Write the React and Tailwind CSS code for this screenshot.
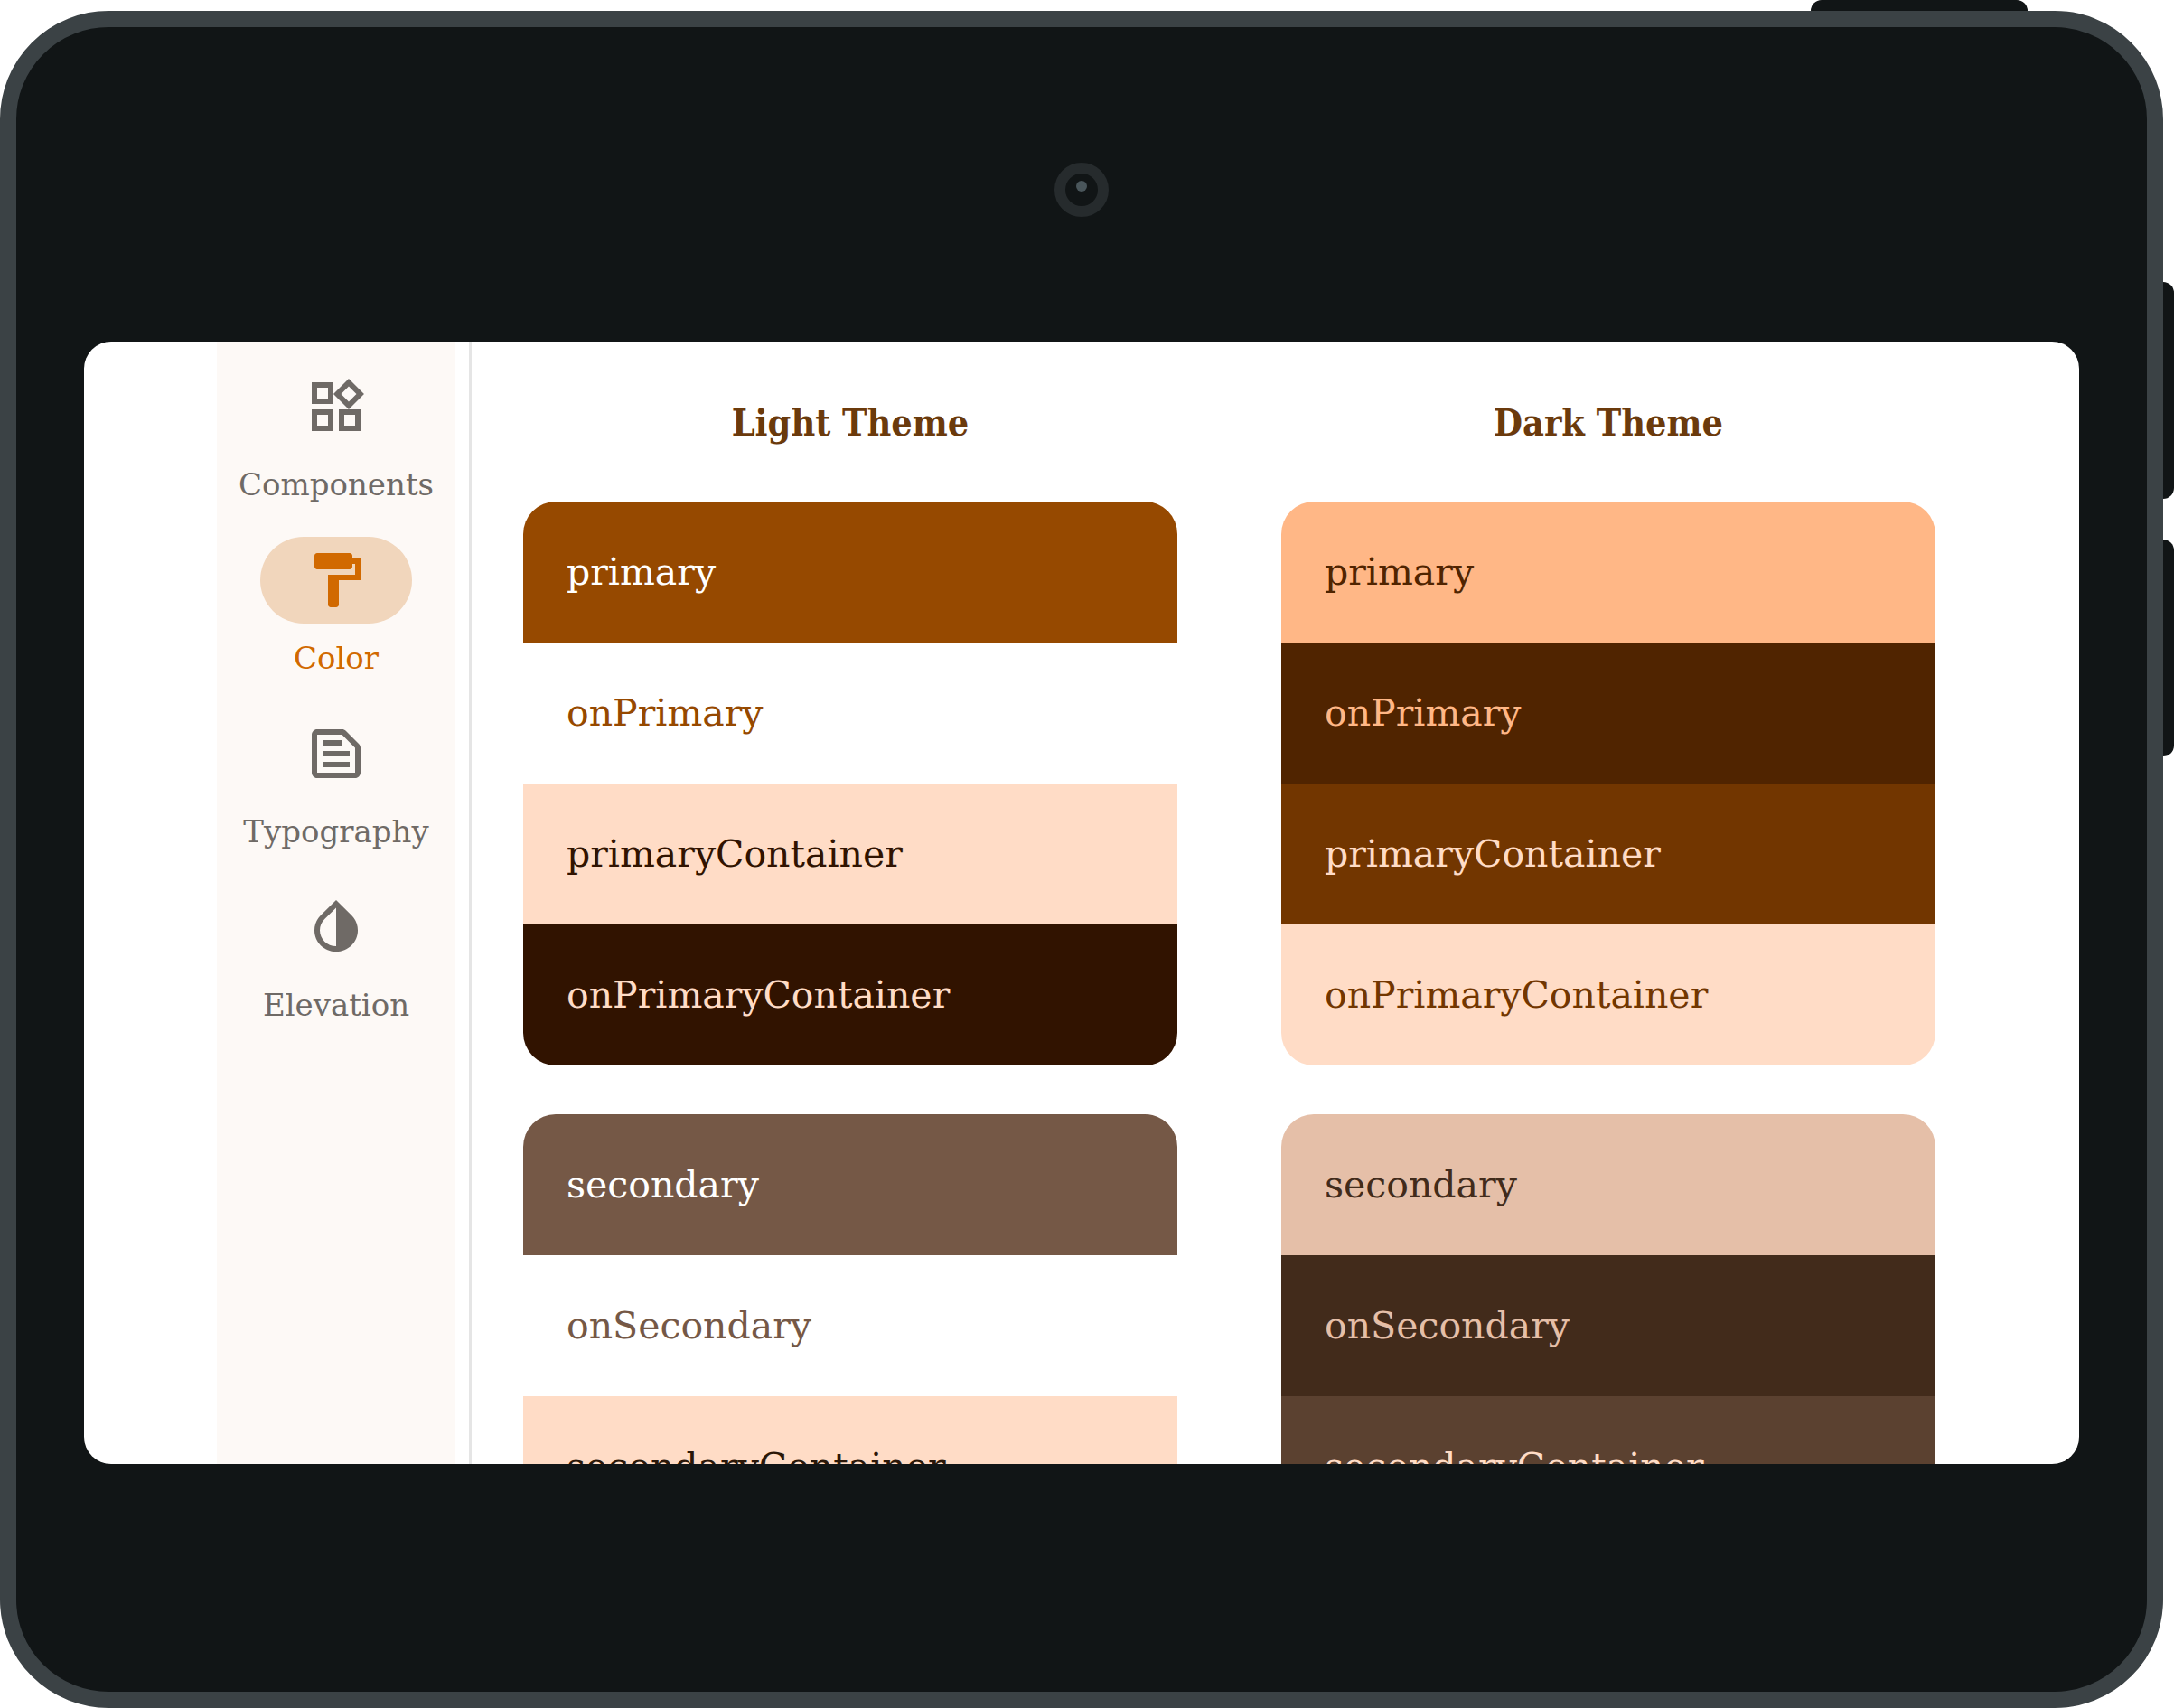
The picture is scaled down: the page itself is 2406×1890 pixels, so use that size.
import React from "react";

const NAV_ITEMS = [
  {
    label: "Components",
    path: "M16.66 4.52l2.83 2.83-2.83 2.83-2.83-2.83 2.83-2.83M9 5v4H5V5h4m10 10v4h-4v-4h4M9 15v4H5v-4h4m7.66-13.31L11 7.34 16.66 13l5.66-5.66-5.66-5.65zM11 3H3v8h8V3zm10 10h-8v8h8v-8zm-10 0H3v8h8v-8z",
  },
  {
    label: "Color",
    active: true,
    path: "M18 4V3c0-.55-.45-1-1-1H5c-.55 0-1 .45-1 1v4c0 .55.45 1 1 1h12c.55 0 1-.45 1-1V6h1v4H9v11c0 .55.45 1 1 1h2c.55 0 1-.45 1-1v-9h8V4h-3z",
  },
  {
    label: "Typography",
    path: "M14.17 5L19 9.83V19H5V5h9.17m0-2H5c-1.1 0-2 .9-2 2v14c0 1.1.9 2 2 2h14c1.1 0 2-.9 2-2V9.83c0-.53-.21-1.04-.59-1.41l-4.83-4.83c-.37-.38-.88-.59-1.41-.59zM7 15h10v2H7v-2zm0-4h10v2H7v-2zm0-4h7v2H7V7z",
  },
  {
    label: "Elevation",
    path: "M12 4.81V19c-3.31 0-6-2.63-6-5.87 0-1.56.62-3.03 1.75-4.14L12 4.81M6.35 7.56C4.9 8.99 4 10.96 4 13.13 4 17.48 7.58 21 12 21s8-3.52 8-7.87c0-2.17-.9-4.14-2.35-5.57L12 2 6.35 7.56z",
  },
];

const THEMES = [
  {
    title: "Light Theme",
    groups: [
      [
        ["primary", "bg-[#964900] text-white"],
        ["onPrimary", "bg-white text-[#964900]"],
        ["primaryContainer", "bg-[#ffdcc6] text-[#311300]"],
        ["onPrimaryContainer", "bg-[#311300] text-[#ffdcc6]"],
      ],
      [
        ["secondary", "bg-[#755846] text-white"],
        ["onSecondary", "bg-white text-[#755846]"],
        ["secondaryContainer", "bg-[#ffdcc6] text-[#2b1708]"],
      ],
    ],
  },
  {
    title: "Dark Theme",
    groups: [
      [
        ["primary", "bg-[#ffb786] text-[#502400]"],
        ["onPrimary", "bg-[#502400] text-[#ffb786]"],
        ["primaryContainer", "bg-[#723600] text-[#ffdcc6]"],
        ["onPrimaryContainer", "bg-[#ffdcc6] text-[#723600]"],
      ],
      [
        ["secondary", "bg-[#e5bfa8] text-[#422b1b]"],
        ["onSecondary", "bg-[#422b1b] text-[#e5bfa8]"],
        ["secondaryContainer", "bg-[#5b4130] text-[#ffdcc6]"],
      ],
    ],
  },
];

function NavItem({ label, path, active }) {
  return (
    <button
      type="button"
      aria-current={active ? "page" : undefined}
      className={`flex flex-col items-center gap-[14px] ${active ? "text-[#d16900]" : "text-[#6f6a66]"}`}
    >
      <span
        className={`flex h-24 w-[168px] items-center justify-center rounded-full ${active ? "bg-[#f1d6bc]" : ""}`}
      >
        <svg viewBox="0 0 24 24" className="size-[72px]" fill="currentColor" aria-hidden="true">
          <path d={path} />
        </svg>
      </span>
      <span className="text-[34px] leading-[48px]">{label}</span>
    </button>
  );
}

function ThemeColumn({ title, groups }) {
  return (
    <section className="flex min-w-0 flex-col">
      <h2 className="pt-[66px] pb-[63px] text-center font-['DejaVu_Serif_Condensed','DejaVu_Serif',serif] text-[41px] leading-[48px] font-bold text-[#6b3a0c]">
        {title}
      </h2>
      <div className="flex flex-col gap-[54px]">
        {groups.map((rows) => (
          <ul key={rows[0][0]} className="overflow-hidden rounded-[36px]">
            {rows.map(([name, colors]) => (
              <li
                key={name}
                className={`flex h-[156px] items-center px-12 text-[41px] leading-[48px] ${colors}`}
              >
                {name}
              </li>
            ))}
          </ul>
        ))}
      </div>
    </section>
  );
}

export default function App() {
  return (
    <div className="relative flex h-screen bg-white pt-3 pr-3 font-['DejaVu_Serif',serif]">
      <div className="absolute top-0 right-[162px] h-3 w-60 rounded-t-[12px] bg-[#111516]" />
      <div className="absolute top-[312px] right-0 h-60 w-3 rounded-r-[12px] bg-[#111516]" />
      <div className="absolute top-[597px] right-0 h-60 w-3 rounded-r-[12px] bg-[#111516]" />

      <div className="flex min-w-0 flex-1 flex-col rounded-[120px] border-[18px] border-[#3b4245] bg-[#111516] px-[75px] pb-[252px]">
        <div className="flex h-[348px] shrink-0 justify-center pt-[150px]">
          <div className="flex size-[60px] justify-center rounded-full border-12 border-[#262b2d] pt-2">
            <div className="size-3 rounded-full bg-[#4a565b]" />
          </div>
        </div>

        <div className="flex min-h-0 flex-1 overflow-hidden rounded-[30px] bg-white pr-[159px] pl-[147px]">
          <nav className="flex w-[264px] shrink-0 flex-col items-center gap-[34px] bg-[#fdf9f6] pt-6">
            {NAV_ITEMS.map((item) => (
              <NavItem key={item.label} {...item} />
            ))}
          </nav>
          <div className="ml-[15px] w-[3px] shrink-0 bg-[#e5e5e5]" />
          <main className="ml-[57px] grid min-w-0 flex-1 grid-cols-2 gap-x-[115px]">
            {THEMES.map((theme) => (
              <ThemeColumn key={theme.title} {...theme} />
            ))}
          </main>
        </div>
      </div>
    </div>
  );
}
